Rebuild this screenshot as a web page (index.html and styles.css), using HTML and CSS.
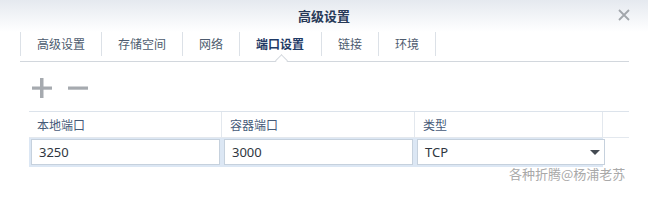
FILE: index.html
```html
<!DOCTYPE html>
<html lang="zh">
<head>
<meta charset="utf-8">
<title>高级设置</title>
<link rel="stylesheet" href="styles.css">
</head>
<body>
<div class="window">
  <div class="titlebar">
    <div class="title">高级设置</div>
    <div class="close" aria-label="close">
      <svg width="12" height="12" viewBox="0 0 12 12"><path d="M1 1L11 11M11 1L1 11" stroke="#a2a6ab" stroke-width="1.8" fill="none"/></svg>
    </div>
  </div>
  <div class="tabs">
    <div class="tab">高级设置</div>
    <div class="tab">存储空间</div>
    <div class="tab">网络</div>
    <div class="tab active">端口设置</div>
    <div class="tab">链接</div>
    <div class="tab last">环境</div>
  </div>
  <div class="tabline"></div>
  <div class="toolbar">
    <svg class="icon" width="20" height="20" viewBox="0 0 20 20"><rect x="0" y="8.5" width="20" height="3.2" fill="#a6aaaf"/><rect x="8" y="0" width="3.5" height="20" fill="#a6aaaf"/></svg>
    <svg class="icon" width="20" height="20" viewBox="0 0 20 20"><rect x="0" y="8.5" width="20" height="3.2" fill="#a6aaaf"/></svg>
  </div>
  <div class="table">
    <div class="hcell">本地端口</div>
    <div class="hcell">容器端口</div>
    <div class="hcell">类型</div>
    <div class="hcell last"></div>
    <div class="bcell"><div class="input">3250</div></div>
    <div class="bcell"><div class="input">3000</div></div>
    <div class="bcell third"><div class="input select">TCP<span class="arrow"></span></div></div>
    <div class="bcell empty"></div>
  </div>
  <div class="watermark">各种折腾@杨浦老苏</div>
</div>
</body>
</html>
```

FILE: styles.css
```css
* { box-sizing: border-box; }
html, body { margin: 0; padding: 0; background: #ffffff; }
body {
  width: 648px;
  height: 200px;
  overflow: hidden;
  font-family: "Noto Sans CJK SC", "Noto Sans", sans-serif;
}
.window { position: relative; width: 648px; height: 200px; }
.titlebar {
  height: 32px;
  background: linear-gradient(#e5e9ef, #ffffff);
  display: flex;
  align-items: center;
  justify-content: center;
  position: relative;
}
.title {
  font-size: 13px;
  font-weight: bold;
  color: #283a58;
  line-height: 32px;
}
.close {
  position: absolute;
  right: 18px;
  top: 9px;
  width: 12px;
  height: 12px;
  display: flex;
}
.tabs {
  display: flex;
  margin-left: 20px;
  height: 24px;
}
.tab {
  border-left: 1px solid #dce1e7;
  padding: 0 16px;
  font-size: 12px;
  line-height: 24px;
  color: #4d5b6e;
  position: relative;
}
.tab.last { border-right: 1px solid #dce1e7; }
.tab.active { font-weight: bold; color: #1f3a66; padding: 0 17px 0 16px; }
.tab.active::after {
  content: "";
  position: absolute;
  left: 50%;
  bottom: -9px;
  width: 8px;
  height: 8px;
  margin-left: -4px;
  background: #ffffff;
  border-left: 1px solid #d2d7dd;
  border-top: 1px solid #d2d7dd;
  transform: rotate(45deg);
  z-index: 2;
}
.tabline {
  margin: 5px 19px 0 20px;
  height: 1px;
  background: #d2d7dd;
}
.toolbar {
  display: flex;
  gap: 16px;
  margin: 16px 0 0 32px;
  height: 20px;
}
.icon { display: block; }
.table {
  margin: 13px 19px 0 29px;
  display: grid;
  grid-template-columns: 193px 193px 188px 26px;
  border-top: 1px solid #dce3eb;
}
.hcell {
  height: 26px;
  border-right: 1px solid #e3e8ee;
  border-bottom: 1px solid #e3e8ee;
  font-size: 12px;
  line-height: 25px;
  padding-left: 8px;
  color: #465a78;
}
.hcell.last { border-right: none; }
.bcell {
  background: #dce7f4;
  padding: 1px 2px 2px 2px;
  height: 29px;
}
.bcell.third { padding-right: 0; }
.bcell.third .input { margin-right: -2px; }
.bcell.empty { background: #ffffff; }
.input {
  height: 26px;
  border: 1px solid #c6d1dd;
  background: #ffffff;
  font-size: 13px;
  line-height: 24px;
  padding-left: 7px;
  color: #2f3640;
  font-family: "Noto Sans", "Noto Sans CJK SC", sans-serif;
  position: relative;
}
.select { display: flex; align-items: center; justify-content: space-between; padding-right: 4px; }
.arrow {
  width: 0;
  height: 0;
  border-left: 5px solid transparent;
  border-right: 5px solid transparent;
  border-top: 5px solid #444a52;
}
.watermark {
  position: absolute;
  left: 509px;
  top: 165px;
  font-size: 13px;
  color: #a9a9a9;
  line-height: 18px;
}
```
